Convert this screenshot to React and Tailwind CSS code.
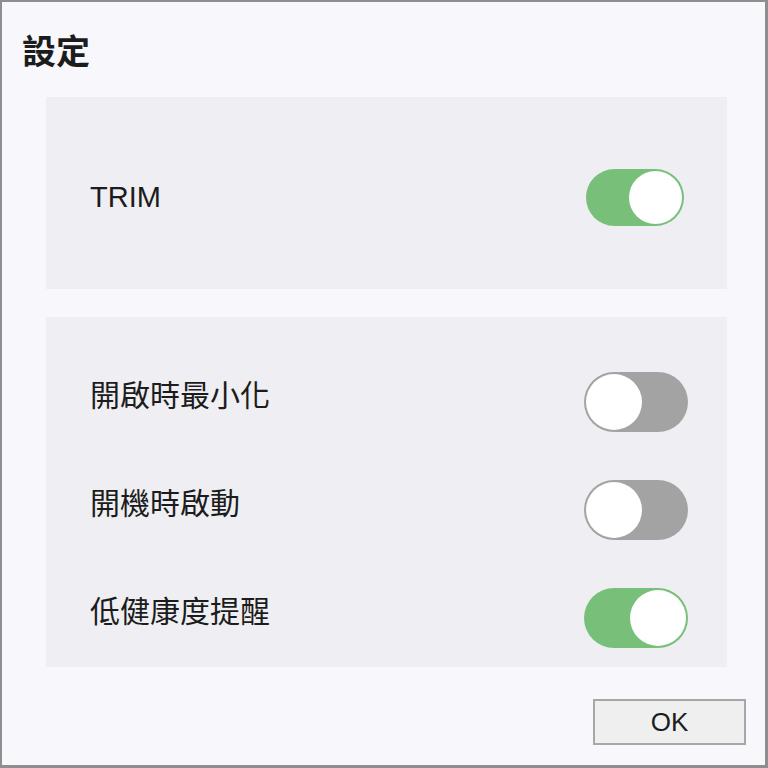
import React from 'react'

const cjk = { fontFamily: '"Liberation Sans", "Noto Sans CJK TC", sans-serif' }

function Toggle({ on, small }) {
  const size = small ? 'w-[98px] h-[57px]' : 'w-[104px] h-[60px]'
  const knob = small ? 'w-[53px] h-[53px]' : 'w-[56px] h-[56px]'
  return (
    <div
      className={`${size} rounded-full flex items-center p-[2px] ${
        on ? 'bg-[#78c07a] justify-end' : 'bg-[#a3a3a3] justify-start'
      }`}
    >
      <div className={`${knob} rounded-full bg-white`} />
    </div>
  )
}

function Row({ label, on }) {
  return (
    <div className="flex items-center justify-between h-[60px]">
      <span className="text-[30px] text-[#1c1c1c] leading-none pb-[12px]">{label}</span>
      <Toggle on={on} />
    </div>
  )
}

export default function App() {
  return (
    <div
      className="w-[768px] h-[768px] bg-[#f8f8fc] border-[#8e8e8e] border-t-2 border-l-2 border-r-[3px] border-b-[3px] flex flex-col"
      style={cjk}
    >
      <div className="ml-[20px] mt-[33px] h-[33px] text-[34px] font-bold leading-none text-[#1c1c1c]">設定</div>

      <div className="ml-[44px] mt-[29px] w-[681px] h-[192px] bg-[#efeff3] flex items-center justify-between pl-[44px] pr-[43px] pt-[8px]">
        <span className="text-[29px] text-[#1c1c1c] leading-none">TRIM</span>
        <Toggle on small />
      </div>

      <div className="ml-[44px] mt-[28px] w-[681px] h-[350px] bg-[#efeff3] flex flex-col gap-[48px] pl-[44px] pr-[39px] pt-[55px]">
        <Row label="開啟時最小化" on={false} />
        <Row label="開機時啟動" on={false} />
        <Row label="低健康度提醒" on />
      </div>

      <div className="flex justify-end mt-[32px] mr-[19px]">
        <button className="w-[153px] h-[46px] bg-[#efefef] border-2 border-[#a7a7a7] text-[26px] text-[#1c1c1c] leading-none">
          OK
        </button>
      </div>
    </div>
  )
}
